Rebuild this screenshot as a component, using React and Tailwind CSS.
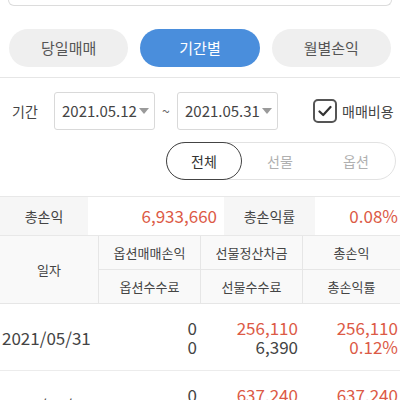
import React from "react";

const F = { fontFamily: '"Noto Sans CJK KR", "Noto Sans", sans-serif' };

function Caret() {
  return (
    <svg width="10" height="6" viewBox="0 0 10 6" className="ml-[2px]">
      <path d="M0 0 H10 L5 6 Z" fill="#9a9a9a" />
    </svg>
  );
}

function DateBox({ value }) {
  return (
    <div className="w-[101px] h-[38px] border border-[#d9d9d9] rounded-[3px] flex items-center pl-[7px] text-[15px] text-[#444]">
      {value}
      <Caret />
    </div>
  );
}

export default function App() {
  return (
    <div style={F} className="w-[400px] h-[400px] overflow-hidden bg-white text-[#444]">
      <div className="mx-[8px] h-[6px] border-x border-b border-[#dcdcdc] rounded-b-[8px]" />
      <div className="flex gap-[12px] px-[9px] mt-[23px] pb-[10px] border-b border-[#e6e6e6]">
        <div className="flex-1 h-[38px] rounded-full bg-[#efefef] flex items-center justify-center text-[15px] text-[#555]">당일매매</div>
        <div className="flex-1 h-[38px] rounded-full bg-[#4a8edc] flex items-center justify-center text-[15px] text-white">기간별</div>
        <div className="flex-1 h-[38px] rounded-full bg-[#efefef] flex items-center justify-center text-[15px] text-[#555]">월별손익</div>
      </div>
      <div className="flex items-center mt-[14px] h-[38px]">
        <span className="ml-[12px] w-[42px] text-[14px]">기간</span>
        <DateBox value="2021.05.12" />
        <span className="w-[22px] text-center text-[14px] text-[#666]">~</span>
        <DateBox value="2021.05.31" />
        <div className="ml-[35px] w-[24px] h-[24px] border-2 border-[#555] rounded-[5px] flex items-center justify-center">
          <svg width="14" height="12" viewBox="0 0 14 12">
            <path d="M1.5 6.5 L5.2 10 L12.5 2" stroke="#333" strokeWidth="2.2" fill="none" strokeLinecap="round" strokeLinejoin="round" />
          </svg>
        </div>
        <span className="ml-[5px] text-[14px] text-[#444]">매매비용</span>
      </div>
      <div className="flex justify-end mt-[12px]">
        <div className="w-[230px] mr-[4px] h-[38px] rounded-full border border-[#e2e2e2] flex items-center">
          <div className="w-[76px] h-[38px] -ml-px rounded-full border-[1.5px] border-[#444] flex items-center justify-center text-[14px] text-[#333]">전체</div>
          <div className="w-[76px] text-center text-[14px] text-[#b0b0b0]">선물</div>
          <div className="w-[76px] text-center text-[14px] text-[#b0b0b0]">옵션</div>
        </div>
      </div>
      <div className="mt-[16px] border-t border-[#e8e8e8] flex h-[40px] border-b">
        <div className="w-[88px] bg-[#f6f6f6] flex items-center justify-center text-[14px]">총손익</div>
        <div className="w-[136px] flex items-center justify-end pr-[7px] text-[17px] text-[#dc5a46]">6,933,660</div>
        <div className="w-[91px] bg-[#f6f6f6] flex items-center justify-center text-[14px]">총손익률</div>
        <div className="flex-1 flex items-center justify-end pr-[2px] text-[17px] text-[#dc5a46]">0.08%</div>
      </div>
      <div className="flex h-[68px] bg-[#f9f9f9] border-b border-[#e6e6e6] text-[13px] text-[#444]">
        <div className="w-[99px] border-r border-[#e6e6e6] flex items-center justify-center">일자</div>
        <div className="w-[102px] border-r border-[#e6e6e6] flex flex-col">
          <div className="h-[34px] border-b border-[#e6e6e6] flex items-center justify-center">옵션매매손익</div>
          <div className="flex-1 flex items-center justify-center">옵션수수료</div>
        </div>
        <div className="w-[102px] border-r border-[#e6e6e6] flex flex-col">
          <div className="h-[34px] border-b border-[#e6e6e6] flex items-center justify-center">선물정산차금</div>
          <div className="flex-1 flex items-center justify-center">선물수수료</div>
        </div>
        <div className="flex-1 flex flex-col">
          <div className="h-[34px] border-b border-[#e6e6e6] flex items-center justify-center">총손익</div>
          <div className="flex-1 flex items-center justify-center">총손익률</div>
        </div>
      </div>
      {[
        ["2021/05/31", "0", "0", "256,110", "6,390", "256,110", "0.12%"],
        ["2021/05/28", "0", "0", "637,240", "9,120", "637,240", "0.29%"],
      ].map((r, i) => (
        <div key={i} className="flex h-[67px] border-b border-[#ececec] text-[17px] leading-[19px]">
          <div className="w-[99px] flex items-center pl-[2px] text-[#444]">{r[0]}</div>
          <div className="w-[102px] flex flex-col justify-center items-end pr-[4px] text-[#444]">
            <span>{r[1]}</span>
            <span>{r[2]}</span>
          </div>
          <div className="w-[102px] flex flex-col justify-center items-end pr-[5px]">
            <span className="text-[#dc5a46]">{r[3]}</span>
            <span className="text-[#444]">{r[4]}</span>
          </div>
          <div className="flex-1 flex flex-col justify-center items-end pr-[2px] text-[#dc5a46]">
            <span>{r[5]}</span>
            <span>{r[6]}</span>
          </div>
        </div>
      ))}
    </div>
  );
}
